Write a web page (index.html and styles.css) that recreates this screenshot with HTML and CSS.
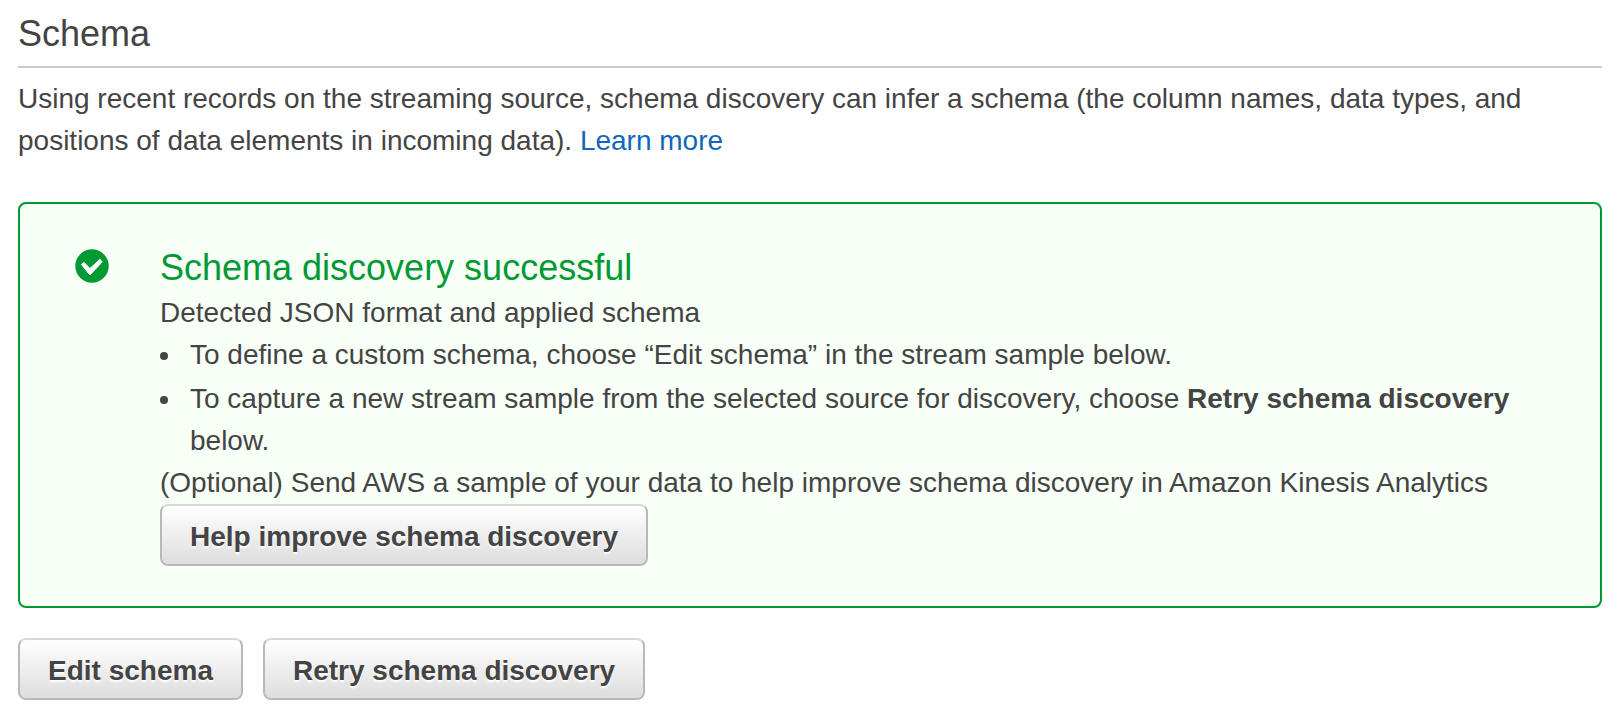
FILE: index.html
```html
<!DOCTYPE html>
<html lang="en">
<head>
<meta charset="utf-8">
<meta name="viewport" content="width=device-width, initial-scale=1">
<title>Schema</title>
<link rel="stylesheet" href="styles.css">
</head>
<body>
<main class="schema">
  <h1 class="schema-title">Schema</h1>
  <p class="intro">Using recent records on the streaming source, schema discovery can infer a schema (the column names, data types, and positions of data elements in incoming data). <a class="link" href="#">Learn more</a></p>
  <section class="alert">
    <svg class="alert-icon" viewBox="0 0 34 34" aria-hidden="true">
      <circle cx="17" cy="17" r="16.7" fill="#009933"/>
      <path d="M6.4 15.4L8.9 13.4L15 19.5L25 10.2L27.2 12.9L14.9 26Z" fill="#fff" stroke="#fff" stroke-width="1" stroke-linejoin="round"/>
    </svg>
    <div class="alert-body">
      <h2 class="alert-title">Schema discovery successful</h2>
      <p class="alert-text">Detected JSON format and applied schema</p>
      <ul class="alert-list">
        <li><span>To define a custom schema, choose “Edit schema” in the stream sample below.</span></li>
        <li><span>To capture a new stream sample from the selected source for discovery, choose <strong>Retry schema discovery</strong> below.</span></li>
      </ul>
      <p class="alert-text">(Optional) Send AWS a sample of your data to help improve schema discovery in Amazon Kinesis Analytics</p>
      <button class="button" type="button">Help improve schema discovery</button>
    </div>
  </section>
  <div class="actions">
    <button class="button" type="button">Edit schema</button>
    <button class="button" type="button">Retry schema discovery</button>
  </div>
</main>
</body>
</html>
```
FILE: styles.css
```css
* {
  box-sizing: border-box;
}

body {
  margin: 0;
  background: #fff;
  color: #444;
  font: 28px/42px "Liberation Sans", Arial, sans-serif;
}

h1, h2, p, ul {
  margin: 0;
  padding: 0;
}

.schema {
  padding: 10px 18px;
}

.schema-title {
  padding-bottom: 8px;
  border-bottom: 2px solid #ccc;
  font-size: 36px;
  line-height: 48px;
  font-weight: 400;
}

.intro {
  margin-top: 10px;
}

.link {
  color: #1166bb;
  text-decoration: none;
}

.alert {
  display: flex;
  gap: 51px;
  margin-top: 40px;
  padding: 41px 55px 40px;
  border: 2px solid #009933;
  border-radius: 8px;
  background: #f7fff7;
}

.alert-icon {
  flex: none;
  width: 34px;
  height: 34px;
  margin-top: 4px;
}

.alert-title {
  margin-bottom: 1px;
  color: #009933;
  font-size: 36px;
  line-height: 46px;
  font-weight: 400;
}

.alert-list {
  list-style: none;
}

.alert-list li {
  display: flex;
  gap: 22px;
}

.alert-list li::before {
  content: "";
  flex: none;
  width: 8px;
  height: 8px;
  margin-top: 18px;
  border-radius: 50%;
  background: #444;
}

.alert-list li + li {
  margin-top: 2px;
}

.button {
  height: 62px;
  padding: 3px 28px 0;
  border: 2px solid #b8b8b8;
  border-top-color: #d9d9d9;
  border-radius: 8px;
  background: linear-gradient(#fff, #ddd) padding-box;
  color: #444;
  font: bold 28px/42px "Liberation Sans", Arial, sans-serif;
  text-shadow: 0 2px 2px #fff;
}

.actions {
  display: flex;
  flex-wrap: wrap;
  gap: 20px;
  margin-top: 30px;
}
```
